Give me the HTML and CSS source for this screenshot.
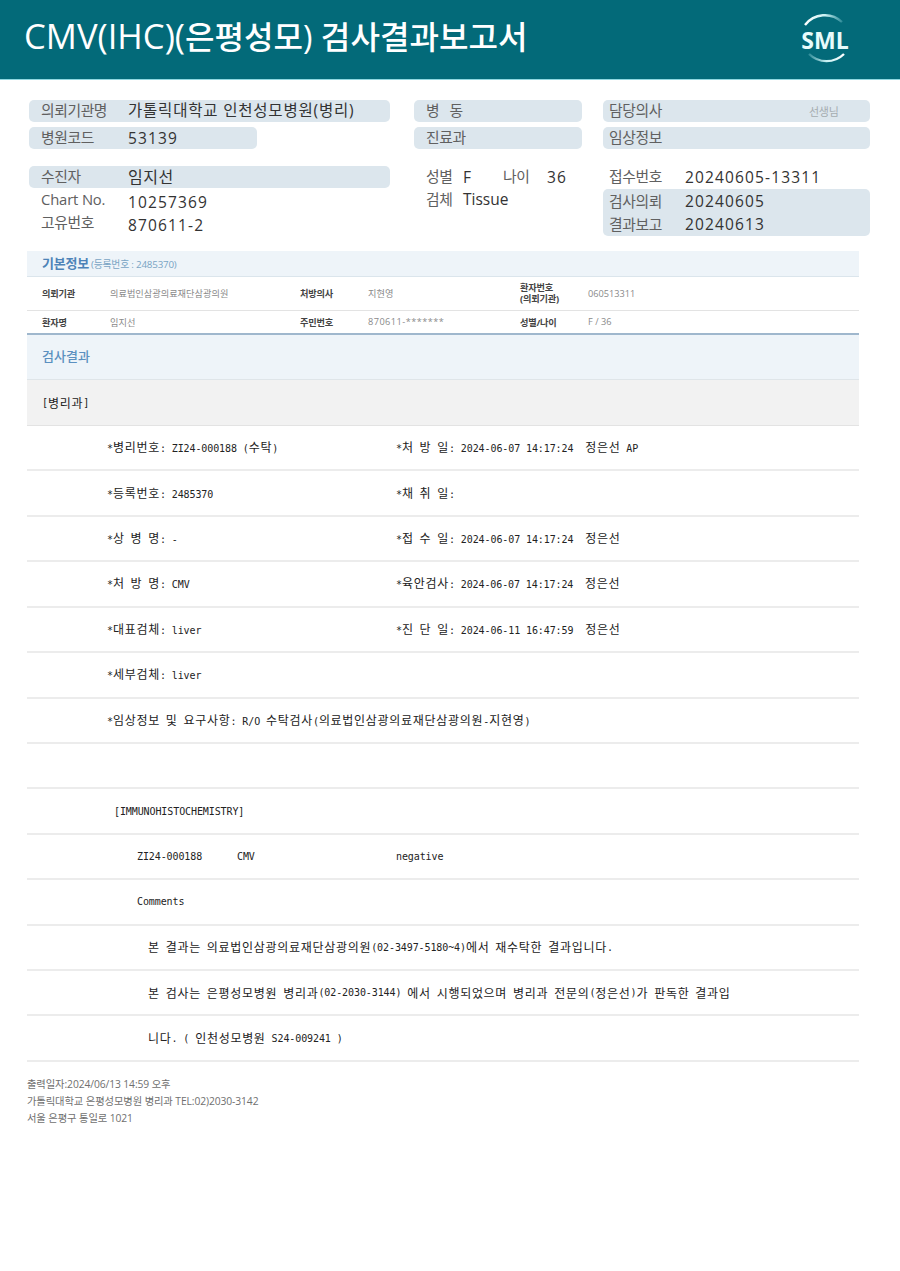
FILE: index.html
```html
<!DOCTYPE html>
<html lang="ko">
<head>
<meta charset="utf-8">
<title>CMV(IHC)(은평성모) 검사결과보고서</title>
<link rel="stylesheet" href="styles.css">
</head>
<body>
<header class="top">
  <h1 class="title"><span class="lat">CMV(IHC)(</span>은평성모) 검사결과보고서</h1>
  <svg class="logo" viewBox="0 0 50 52" width="50" height="52" aria-label="SML">
    <defs>
      <linearGradient id="arcTop" x1="0" y1="0" x2="1" y2="0">
        <stop offset="0" stop-color="#ffffff"/><stop offset="0.55" stop-color="#c8f0f2"/><stop offset="1" stop-color="#2f8c99"/>
      </linearGradient>
      <linearGradient id="arcBot" x1="0" y1="0" x2="1" y2="0">
        <stop offset="0" stop-color="#2f8c99"/><stop offset="0.5" stop-color="#c8f0f2"/><stop offset="1" stop-color="#ffffff"/>
      </linearGradient>
    </defs>
    <path d="M4 13 A25 25 0 0 1 41 10" fill="none" stroke="url(#arcTop)" stroke-width="2.4"/>
    <path d="M8 42 A25 25 0 0 0 43 42" fill="none" stroke="url(#arcBot)" stroke-width="2.4"/>
    <text class="logo-text" x="24" y="37" text-anchor="middle">SML</text>
  </svg>
</header>

<section class="info">
  <div class="col col-a">
    <div class="row bar"><span class="lab">의뢰기관명</span><span class="val kor wide-kor">가톨릭대학교 인천성모병원(병리)</span></div>
    <div class="row bar short"><span class="lab">병원코드</span><span class="val num">53139</span></div>
    <div class="row bar group"><span class="lab">수진자</span><span class="val kor big">임지선</span></div>
    <div class="row"><span class="lab chart">Chart No.</span><span class="val num low">10257369</span></div>
    <div class="row"><span class="lab">고유번호</span><span class="val num low">870611-2</span></div>
  </div>
  <div class="col col-b">
    <div class="row bar"><span class="lab ward">병 &nbsp; 동</span></div>
    <div class="row bar"><span class="lab">진료과</span></div>
    <div class="row group"><span class="lab sm">성별</span><span class="val sex">F</span><span class="lab sm age">나이</span><span class="val num">36</span></div>
    <div class="row"><span class="lab sm">검체</span><span class="val tissue">Tissue</span></div>
  </div>
  <div class="col col-c">
    <div class="row bar"><span class="lab">담당의사</span><span class="sir">선생님</span></div>
    <div class="row bar"><span class="lab">임상정보</span></div>
    <div class="row group"><span class="lab">접수번호</span><span class="val num">20240605-13311</span></div>
    <div class="bar block">
      <div class="row"><span class="lab">검사의뢰</span><span class="val num">20240605</span></div>
      <div class="row"><span class="lab">결과보고</span><span class="val num">20240613</span></div>
    </div>
  </div>
</section>

<main class="report">
  <div class="basic-head"><strong>기본정보</strong> <span>(등록번호 : 2485370)</span></div>
  <div class="basic basic-1">
    <b>의뢰기관</b><span>의료법인삼광의료재단삼광의원</span>
    <b>처방의사</b><span>지현영</span>
    <b class="two">환자번호<br>(의뢰기관)</b><span>060513311</span>
  </div>
  <div class="basic basic-2">
    <b>환자명</b><span>임지선</span>
    <b>주민번호</b><span class="rrn">870611-*******</span>
    <b>성별/나이</b><span>F / 36</span>
  </div>
  <div class="result-head">검사결과</div>
  <div class="dept"><i>[</i><u>병리과</u><i>]</i></div>

  <div class="lines">
    <div class="ln"><div class="c1"><i>*</i><u>병리번호</u><i>: ZI24-000188 (</i><u>수탁</u><i>)</i></div><div><i>*</i><u>처</u><i> </i><u>방</u><i> </i><u>일</u><i>: 2024-06-07 14:17:24  </i><u>정은선</u><i> AP</i></div></div>
    <div class="ln"><div class="c1"><i>*</i><u>등록번호</u><i>: 2485370</i></div><div><i>*</i><u>채</u><i> </i><u>취</u><i> </i><u>일</u><i>:</i></div></div>
    <div class="ln"><div class="c1"><i>*</i><u>상</u><i> </i><u>병</u><i> </i><u>명</u><i>: -</i></div><div><i>*</i><u>접</u><i> </i><u>수</u><i> </i><u>일</u><i>: 2024-06-07 14:17:24  </i><u>정은선</u></div></div>
    <div class="ln"><div class="c1"><i>*</i><u>처</u><i> </i><u>방</u><i> </i><u>명</u><i>: CMV</i></div><div><i>*</i><u>육안검사</u><i>: 2024-06-07 14:17:24  </i><u>정은선</u></div></div>
    <div class="ln"><div class="c1"><i>*</i><u>대표검체</u><i>: liver</i></div><div><i>*</i><u>진</u><i> </i><u>단</u><i> </i><u>일</u><i>: 2024-06-11 16:47:59  </i><u>정은선</u></div></div>
    <div class="ln"><div class="c1"><i>*</i><u>세부검체</u><i>: liver</i></div></div>
    <div class="ln"><div class="c1 wide"><i>*</i><u>임상정보</u><i> </i><u>및</u><i> </i><u>요구사항</u><i>: R/O </i><u>수탁검사</u><i>(</i><u>의료법인삼광의료재단삼광의원</u><i>-</i><u>지현영</u><i>)</i></div></div>
    <div class="ln"></div>
    <div class="ln in-a"><i>[IMMUNOHISTOCHEMISTRY]</i></div>
    <div class="ln in-b"><div class="c2"><i>ZI24-000188</i></div><div class="c3"><i>CMV</i></div><div><i>negative</i></div></div>
    <div class="ln in-b"><i>Comments</i></div>
    <div class="ln in-c"><u>본</u><i> </i><u>결과는</u><i> </i><u>의료법인삼광의료재단삼광의원</u><i>(02-3497-5180~4)</i><u>에서</u><i> </i><u>재수탁한</u><i> </i><u>결과입니다</u><i>.</i></div>
    <div class="ln in-c"><u>본</u><i> </i><u>검사는</u><i> </i><u>은평성모병원</u><i> </i><u>병리과</u><i>(02-2030-3144) </i><u>에서</u><i> </i><u>시행되었으며</u><i> </i><u>병리과</u><i> </i><u>전문의</u><i>(</i><u>정은선</u><i>)</i><u>가</u><i> </i><u>판독한</u><i> </i><u>결과입</u></div>
    <div class="ln in-c"><u>니다</u><i>. ( </i><u>인천성모병원</u><i> S24-009241 )</i></div>
  </div>

  <footer class="foot">
    <p>출력일자:2024/06/13 14:59 오후</p>
    <p>가톨릭대학교 은평성모병원 병리과 TEL:02)2030-3142</p>
    <p>서울 은평구 통일로 1021</p>
  </footer>
</main>
</body>
</html>
```
FILE: styles.css
```css
* { box-sizing: border-box; }
html, body { margin: 0; padding: 0; background: #fff; }
body { font-family: "Open Sans", "Noto Sans CJK KR", sans-serif; color: #333; width: 900px; height: 1271px; overflow: hidden; }

.top { height: 80px; background: #036a79; border-bottom: 1px solid #8fd8e0; display: flex; align-items: center; justify-content: space-between; padding: 0 49px 0 24px; }
.title { margin: 0; font-size: 32.1px; font-weight: 500; color: #fff; line-height: 1; padding-bottom: 7px; white-space: nowrap; }
.lat { font-size: 34.6px; }
.logo { margin-bottom: 4px; }
.logo-text { font-family: "Open Sans", sans-serif; font-weight: 700; font-size: 23px; fill: #e8fbfb; }

.info { display: flex; margin: 20px 0 0 29px; gap: 24px; }
.col { display: flex; flex-direction: column; font-size: 15.5px; }
.col-a { width: 361px; }
.col-b { width: 168px; margin-right: -3px; }
.col-c { width: 267px; }
.row { display: flex; align-items: center; height: 22px; padding-left: 12px; margin-bottom: 1px; white-space: nowrap; }
.bar { background: #dce6ed; border-radius: 5px; }
.row.bar { margin-bottom: 5px; }
.short { width: 228px; }
.row.group { margin-top: 12px; margin-bottom: 1px; }
.lab { color: #606060; font-size: 14.8px; letter-spacing: -0.4px; width: 87px; flex: none; padding-bottom: 3px; }
.lab.chart { letter-spacing: -0.15px; }
.lab.sm { width: 37px; }
.lab.age { width: 44px; }
.lab.ward { width: auto; }
.val { color: #333; padding-bottom: 1px; }
.kor { letter-spacing: 0.55px; padding-bottom: 3px; }
.wide-kor { letter-spacing: 0.8px; }
.num { letter-spacing: 1.15px; }
.low { padding-top: 4px; padding-bottom: 0; }
.big { font-size: 16px; }
.sex { width: 40px; }
.tissue { padding-bottom: 2px; }
.col-c .row { padding-left: 6px; }
.col-c .lab { width: 76px; }
.sir { margin-left: 124px; font-size: 11px; color: #a5acb0; letter-spacing: -0.3px; }
.block { height: 47px; padding-top: 1px; }
.block .row { height: 23px; margin: 0; }

.report { margin: 15px 41px 0 27px; }
.basic-head { height: 26px; background: #eef4f9; border-bottom: 1px solid #dbe5ec; padding: 0 0 2px 15px; display: flex; align-items: center; gap: 2px; }
.basic-head strong { font-size: 13px; color: #4d83b8; letter-spacing: -0.2px; }
.basic-head span { font-size: 9.8px; color: #79a4c4; letter-spacing: -0.2px; padding-top: 2px; }
.basic { display: grid; grid-template-columns: 68px 190px 68px 152px 68px 1fr; align-items: center; padding-left: 15px; font-size: 9.2px; border-bottom: 1px solid #e3e3e3; }
.basic b { color: #444; font-weight: 700; letter-spacing: -0.2px; }
.basic span { color: #8a8a8a; }
.basic .rrn { letter-spacing: 0.45px; }
.basic-1 { height: 34px; padding-bottom: 1px; }
.basic-2 { height: 24px; border-bottom: 2px solid #9fb7cd; padding-bottom: 1px; }
.two { line-height: 11px; }
.result-head { height: 45px; background: #eef4f9; border-bottom: 1px solid #dfe5e9; padding: 0 0 3px 15px; display: flex; align-items: center; font-size: 13px; font-weight: 500; color: #5b90c0; }

.dept, .lines { font-family: "DejaVu Sans Mono", "Noto Sans CJK KR", monospace; font-size: 10px; color: #222; white-space: pre; }
.dept i, .lines i { font-style: normal; letter-spacing: -0.1px; }
.dept u, .lines u { text-decoration: none; font-family: "Noto Sans CJK KR", sans-serif; font-size: 12px; letter-spacing: 0.7px; line-height: 1; }
.dept { height: 46px; background: #f2f2f2; border-bottom: 1px solid #e3e3e3; padding-left: 15px; display: flex; align-items: center; }
.lines { display: grid; grid-auto-rows: 45.43px; }
.ln { border-bottom: 2px solid #ececec; display: flex; align-items: center; padding-left: 80px; }
.c1 { width: 289px; flex: none; }
.c1.wide { width: auto; }
.c2 { width: 100px; flex: none; }
.c3 { width: 159px; flex: none; }
.in-a { padding-left: 87px; }
.in-b { padding-left: 110px; }
.in-c { padding-left: 121px; }

.foot { margin-top: 14px; font-size: 10.3px; color: #6f6f6f; }
.foot p { margin: 0; height: 17px; line-height: 17px; letter-spacing: -0.1px; }
```
